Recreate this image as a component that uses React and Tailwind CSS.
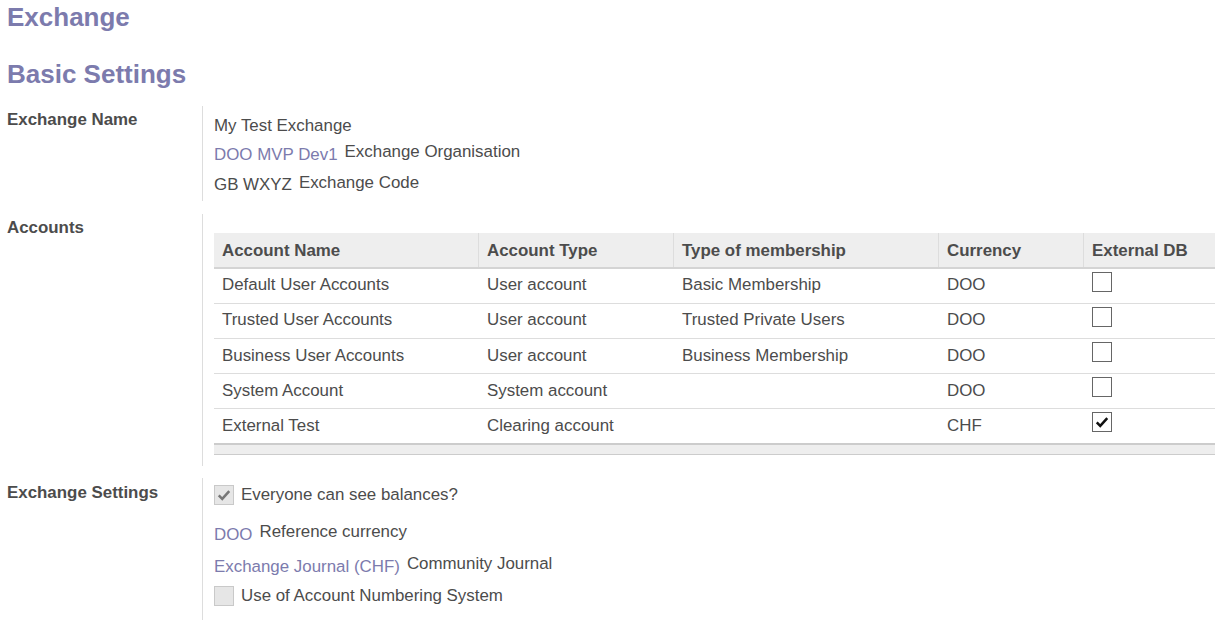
import React from 'react';

const accounts = [
  { name: 'Default User Accounts', type: 'User account', membership: 'Basic Membership', currency: 'DOO', external: false },
  { name: 'Trusted User Accounts', type: 'User account', membership: 'Trusted Private Users', currency: 'DOO', external: false },
  { name: 'Business User Accounts', type: 'User account', membership: 'Business Membership', currency: 'DOO', external: false },
  { name: 'System Account', type: 'System account', membership: '', currency: 'DOO', external: false },
  { name: 'External Test', type: 'Clearing account', membership: '', currency: 'CHF', external: true },
];

const Check = ({ color }) => (
  <svg viewBox="0 0 20 20" className="w-[14px] h-[14px]">
    <path d="M2.5 10.5 L7.5 15.5 L17.5 4.5" fill="none" stroke={color} strokeWidth="3.6" strokeLinejoin="miter" />
  </svg>
);

const TableCheckbox = ({ checked }) => (
  <div className="w-[20px] h-[20px] border border-[#666666] bg-white flex items-center justify-center">
    {checked && <Check color="#111111" />}
  </div>
);

const FormCheckbox = ({ checked }) => (
  <div className="w-[20px] h-[20px] shrink-0 border border-[#c9c9c9] bg-[#e6e6e6] flex items-center justify-center">
    {checked && <Check color="#777777" />}
  </div>
);

const Section = ({ label, className, labelClass = 'pt-[4px]', contentClass, children }) => (
  <div className={`flex ${className}`}>
    <div className={`w-[195px] shrink-0 font-bold leading-[20px] ${labelClass}`}>{label}</div>
    <div className={`flex-1 min-w-0 border-l border-[#dddddd] pl-[11px] ${contentClass}`}>{children}</div>
  </div>
);

const cols = 'grid grid-cols-[264px_195px_265px_145px_240px]';

const App = () => {
  return (
    <div className="w-full h-[620px] overflow-hidden bg-white pl-[7px] pt-[2px] text-[16.9px] text-[#4c4c4c] font-['Liberation_Sans',Arial,sans-serif]">
      <h1 className="text-[26px] leading-[30px] font-bold text-[#7c7bad]">Exchange</h1>
      <h2 className="mt-[27px] text-[26px] leading-[30px] font-bold text-[#7c7bad]">Basic Settings</h2>

      <Section label="Exchange Name" className="mt-[17px]" contentClass="pt-[5px] pb-[4px] leading-[29px]">
        <div className="h-[26px]">My Test Exchange</div>
        <div className="h-[31px] flex items-start gap-[7px]">
          <span className="pt-[3px] text-[#7c7bad]">DOO MVP Dev1</span>
          <span>Exchange Organisation</span>
        </div>
        <div className="h-[29px] flex items-start gap-[7px]">
          <span className="pt-[2px]">GB WXYZ</span>
          <span>Exchange Code</span>
        </div>
      </Section>

      <Section label="Accounts" className="mt-[13px]" contentClass="pt-[19px] pb-[11px]">
        <div className="w-[1110px] leading-[20px]">
          <div className={`${cols} h-[36px] bg-[#eeeeee] border-b-2 border-[#d4d4d4] font-bold`}>
            <div className="px-2 pt-[8px]">Account Name</div>
            <div className="px-2 pt-[8px] border-l border-[#dddddd]">Account Type</div>
            <div className="px-2 pt-[8px] border-l border-[#dddddd]">Type of membership</div>
            <div className="px-2 pt-[8px] border-l border-[#dddddd]">Currency</div>
            <div className="px-2 pt-[8px] border-l border-[#dddddd]">External DB</div>
          </div>
          {accounts.map((a, i) => (
            <div
              key={a.name}
              className={`${cols} ${i < accounts.length - 1 ? 'h-[35px] border-b border-[#dddddd]' : 'h-[34px]'}`}
            >
              <div className={`px-2 ${i < 2 ? 'pt-[6px]' : 'pt-[7px]'}`}>{a.name}</div>
              <div className={`px-[9px] ${i < 2 ? 'pt-[6px]' : 'pt-[7px]'}`}>{a.type}</div>
              <div className={`px-[9px] ${i < 2 ? 'pt-[6px]' : 'pt-[7px]'}`}>{a.membership}</div>
              <div className={`px-[9px] ${i < 2 ? 'pt-[6px]' : 'pt-[7px]'}`}>{a.currency}</div>
              <div className="px-[9px] pt-[3px]">
                <TableCheckbox checked={a.external} />
              </div>
            </div>
          ))}
          <div className="h-[12px] bg-[#eeeeee] border-t-2 border-b border-[#cccccc]" />
        </div>
      </Section>

      <Section label="Exchange Settings" className="mt-[12px]" labelClass="pt-[5px]" contentClass="pt-[7px] pb-[20px] leading-[20px]">
        <div className="flex items-start gap-[7px]">
          <FormCheckbox checked />
          <span>Everyone can see balances?</span>
        </div>
        <div className="mt-[17px] flex items-start gap-[7px]">
          <span className="pt-[3px] text-[#7c7bad]">DOO</span>
          <span>Reference currency</span>
        </div>
        <div className="mt-[9px] flex items-start gap-[7px]">
          <span className="pt-[3px] text-[#7c7bad]">Exchange Journal (CHF)</span>
          <span>Community Journal</span>
        </div>
        <div className="mt-[9px] flex items-start gap-[7px]">
          <FormCheckbox />
          <span>Use of Account Numbering System</span>
        </div>
      </Section>
    </div>
  );
};

export default App;
